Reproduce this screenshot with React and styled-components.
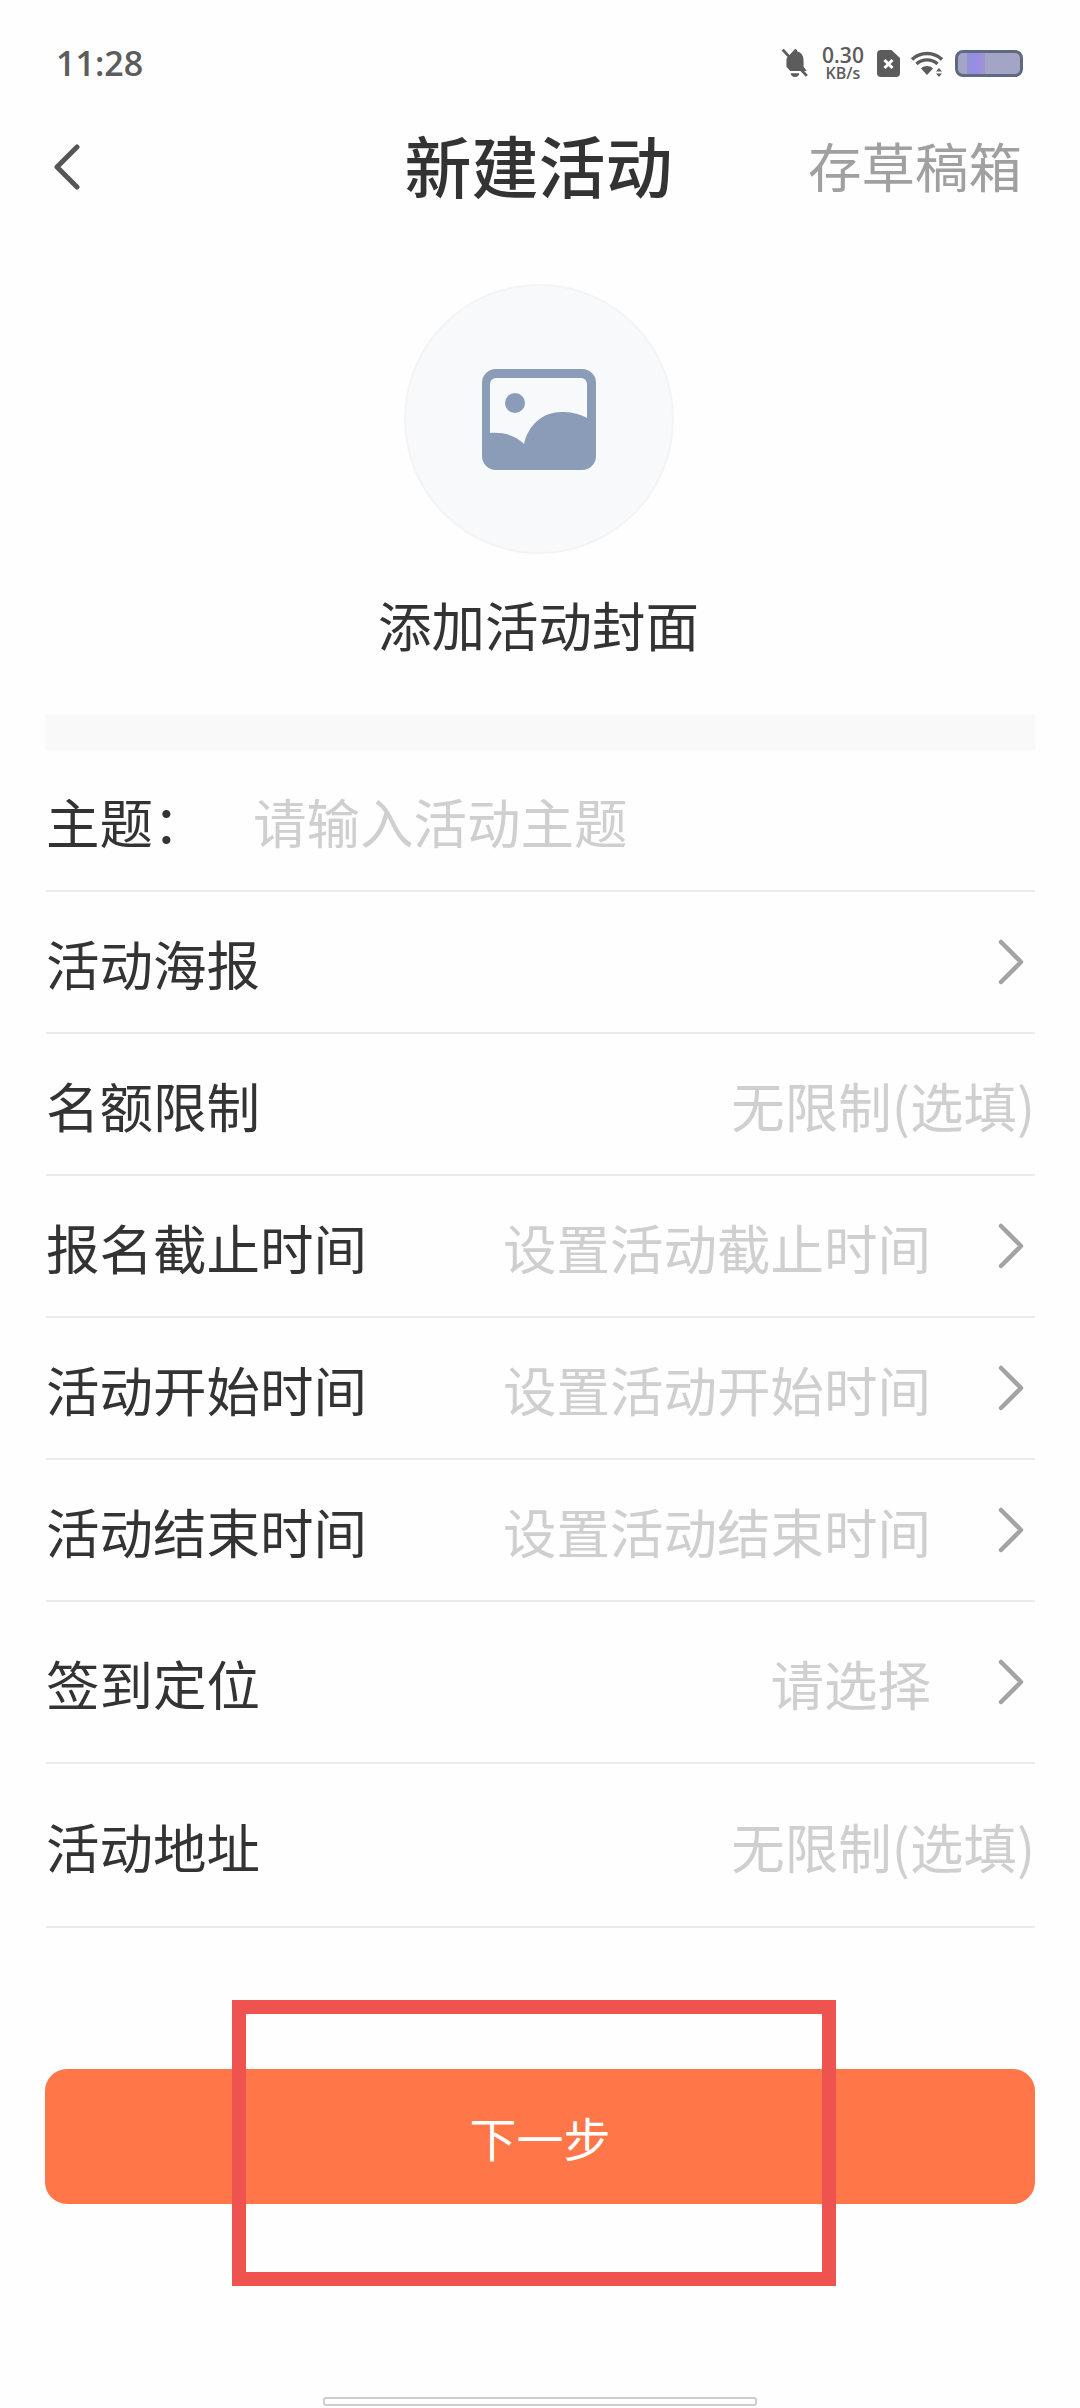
import React from "react";
import styled, { createGlobalStyle } from "styled-components";

const Global = createGlobalStyle`
  html, body { margin: 0; padding: 0; background: #fefefe; }
  * { box-sizing: border-box; }
  body { font-family: "Noto Sans CJK SC", "Noto Sans", sans-serif; }
`;

const Page = styled.div`
  position: relative;
  width: 1080px;
  height: 2408px;
  overflow: hidden;
  background: #fefefe;
  display: flex;
  flex-direction: column;
`;

const StatusBar = styled.div`
  height: 126px;
  padding: 0 57px 0 56px;
  display: flex;
  align-items: center;
  justify-content: space-between;
`;

const Time = styled.span`
  font-family: "Open Sans", sans-serif;
  font-size: 34px;
  font-weight: 600;
  color: #5c5c5c;
`;

const StatusIcons = styled.div`
  display: flex;
  align-items: center;
  gap: 10px;
`;

const Speed = styled.div`
  display: flex;
  flex-direction: column;
  align-items: center;
  font-family: "Open Sans", sans-serif;
  font-weight: 600;
  color: #5c5c5c;
  width: 48px;
`;

const SpeedValue = styled.span`
  font-size: 21px;
  line-height: 20px;
`;

const SpeedUnit = styled.span`
  font-size: 16px;
  line-height: 16px;
`;

const Battery = styled.div`
  position: relative;
  width: 68px;
  height: 27px;
  margin-left: 1px;
  border: 3px solid #5f6a80;
  border-radius: 8px;
  background: #a2a5c6;
  overflow: hidden;
`;

const BatteryFill = styled.div`
  position: absolute;
  left: 9px;
  top: 0;
  bottom: 0;
  width: 18px;
  background: linear-gradient(90deg, #8f93d8 0%, #9a8be6 60%, #a095c8 100%);
`;

const Nav = styled.div`
  position: relative;
  height: 82px;
  padding: 0 58px 0 52px;
  display: flex;
  align-items: center;
  justify-content: space-between;
`;

const Title = styled.h1`
  position: absolute;
  left: 0;
  right: 3px;
  top: -3px;
  margin: 0;
  text-align: center;
  font-size: 67px;
  line-height: 82px;
  font-weight: 500;
  color: #333;
  pointer-events: none;
`;

const Draft = styled.span`
  font-size: 53.5px;
  line-height: 78px;
  margin-bottom: 4px;
  color: #a0a0a0;
`;

const Cover = styled.div`
  padding: 76px 3px 0 0;
  display: flex;
  flex-direction: column;
  align-items: center;
`;

const CoverCircle = styled.div`
  width: 270px;
  height: 270px;
  border-radius: 50%;
  background: #f8f9fb;
  border: 2px solid #f3f4f6;
  display: flex;
  align-items: center;
  justify-content: center;
`;

const CoverLabel = styled.div`
  margin-top: 40px;
  font-size: 53.5px;
  line-height: 60px;
  color: #333;
`;

const Band = styled.div`
  margin: 61px 45px 0 46px;
  height: 35px;
  background: #f9f9fa;
  box-shadow: 0 0 4px #f9f9fa;
`;

const Form = styled.div`
  margin: 0 45px 0 46px;
  display: flex;
  flex-direction: column;
`;

const Row = styled.div`
  height: ${(p) => p.$h}px;
  border-bottom: 2px solid #ececec;
  display: flex;
  align-items: center;
  font-size: 53.5px;
`;

const Label = styled.span`
  color: #333;
  flex: none;
  width: ${(p) => (p.$inline ? "207px" : "auto")};
`;

const Input = styled.span`
  color: #cfcfcf;
`;

const Value = styled.span`
  margin-left: auto;
  color: #cfcfcf;
`;

const ChevronSlot = styled.span`
  margin-left: ${(p) => (p.$alone ? "auto" : "66px")};
  margin-right: 10px;
  display: flex;
  flex: none;
`;

const NextButton = styled.button`
  margin: 141px 45px 0 45px;
  height: 135px;
  border: 0;
  border-radius: 22px;
  background: #ff7648;
  color: #fff;
  font: inherit;
  font-size: 47px;
`;

const HomeBar = styled.div`
  margin: 193px auto 0;
  width: 434px;
  height: 9px;
  border-radius: 3px;
  background: #fff;
  border: 2px solid #cfcfcf;
`;

const Annotation = styled.div`
  position: absolute;
  left: 232px;
  top: 2000px;
  width: 604px;
  height: 286px;
  border: 14px solid #ef5350;
`;

const Chevron = () => (
  <svg width="28" height="46" viewBox="0 0 28 46" fill="none">
    <path d="M4 3 L24 23 L4 43" stroke="#a3a3a3" strokeWidth="4.5" strokeLinecap="round" strokeLinejoin="round" />
  </svg>
);

const rows = [
  { label: "活动海报", h: 142, chevron: true },
  { label: "名额限制", h: 142, value: "无限制(选填)" },
  { label: "报名截止时间", h: 142, value: "设置活动截止时间", chevron: true },
  { label: "活动开始时间", h: 142, value: "设置活动开始时间", chevron: true },
  { label: "活动结束时间", h: 142, value: "设置活动结束时间", chevron: true },
  { label: "签到定位", h: 162, value: "请选择", chevron: true },
  { label: "活动地址", h: 164, value: "无限制(选填)" },
];

export default function App() {
  return (
    <Page>
      <Global />
      <StatusBar>
        <Time>11:28</Time>
        <StatusIcons>
          <svg width="28" height="30" viewBox="0 0 26 28">
            <path d="M13 1c1.400 0 2.200 1 2.200 2.200C19.500 4.200 21 8 21 12v5.500l3 4H8.500L5 17.500V12c0-1 .1-2 .5-3zM9 23.500h8c0 2-1.800 3.500-4 3.500s-4-1.500-4-3.500z" fill="#5c5c5c" />
            <path d="M1.500 1.500 L24 26" stroke="#5c5c5c" strokeWidth="2.600" />
          </svg>
          <Speed>
            <SpeedValue>0.30</SpeedValue>
            <SpeedUnit>KB/s</SpeedUnit>
          </Speed>
          <svg width="23" height="27" viewBox="0 0 23 27">
            <path d="M4 0h10.500L23 8v15a4 4 0 0 1-4 4H4a4 4 0 0 1-4-4V4a4 4 0 0 1 4-4z" fill="#5c5c5c" />
            <path d="M7.500 10 L15.500 18 M15.500 10 L7.500 18" stroke="#fff" strokeWidth="3" />
          </svg>
          <svg width="34" height="27" viewBox="0 0 34 27" fill="none">
            <path d="M2 9.500C10 1.500 24 1.500 32 9.500" stroke="#5c5c5c" strokeWidth="3.400" />
            <path d="M6.500 14C12 8.500 22 8.500 27.500 14" stroke="#5c5c5c" strokeWidth="3.400" />
            <path d="M11 18.500c3.500-3.200 8.500-3.200 12 0L17 25z" fill="#5c5c5c" />
            <path d="M29 18l3 3.500h-6zM29 27l3-3.500h-6z" fill="#5c5c5c" />
          </svg>
          <Battery>
            <BatteryFill />
          </Battery>
        </StatusIcons>
      </StatusBar>

      <Nav>
        <svg width="30" height="46" viewBox="0 0 30 46" fill="none">
          <path d="M25 3 L5 23 L25 43" stroke="#555" strokeWidth="5" strokeLinecap="round" strokeLinejoin="round" />
        </svg>
        <Title>新建活动</Title>
        <Draft>存草稿箱</Draft>
      </Nav>

      <Cover>
        <CoverCircle>
          <svg width="114" height="101" viewBox="0 0 114 101">
            <path
              fillRule="evenodd"
              d="M14 0h86a14 14 0 0 1 14 14v73a14 14 0 0 1-14 14H14A14 14 0 0 1 0 87V14A14 14 0 0 1 14 0zM8 15a6 6 0 0 1 6-6h85a6 6 0 0 1 6 6v34c-9-5-17-6-26-6-19 0-33 14-37 32-6-7-18-12-34-11z"
              fill="#8a9cb8"
            />
            <circle cx="33" cy="34" r="10" fill="#8a9cb8" />
          </svg>
        </CoverCircle>
        <CoverLabel>添加活动封面</CoverLabel>
      </Cover>

      <Band />

      <Form>
        <Row $h={142}>
          <Label $inline>主题：</Label>
          <Input>请输入活动主题</Input>
        </Row>
        {rows.map((r) => (
          <Row key={r.label} $h={r.h}>
            <Label>{r.label}</Label>
            {r.value && <Value>{r.value}</Value>}
            {r.chevron && (
              <ChevronSlot $alone={!r.value}>
                <Chevron />
              </ChevronSlot>
            )}
          </Row>
        ))}
      </Form>

      <NextButton>下一步</NextButton>
      <HomeBar />
      <Annotation />
    </Page>
  );
}
